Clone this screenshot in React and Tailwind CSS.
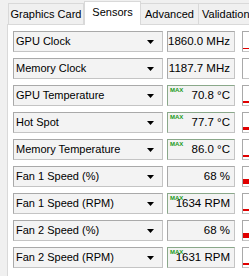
import React from "react";

const rows = [
  { label: "GPU Clock", value: "1860.0 MHz", max: false, bar: 1 },
  { label: "Memory Clock", value: "1187.7 MHz", max: false, bar: 0 },
  { label: "GPU Temperature", value: "70.8 °C", max: true, bar: 2 },
  { label: "Hot Spot", value: "77.7 °C", max: true, bar: 3 },
  { label: "Memory Temperature", value: "86.0 °C", max: true, bar: 2 },
  { label: "Fan 1 Speed (%)", value: "68 %", max: false, bar: 5 },
  { label: "Fan 1 Speed (RPM)", value: "1634 RPM", max: true, bar: 2 },
  { label: "Fan 2 Speed (%)", value: "68 %", max: false, bar: 5 },
  { label: "Fan 2 Speed (RPM)", value: "1631 RPM", max: true, bar: 2 },
];

function Arrow() {
  return (
    <svg width="7" height="4" viewBox="0 0 7 4" className="shrink-0">
      <polygon points="0,0 7,0 3.5,4" fill="#000" />
    </svg>
  );
}

export default function App() {
  return (
    <div
      className="w-[249px] h-[276px] bg-[#f0f0f0] overflow-hidden text-[#000] whitespace-nowrap"
      style={{ fontFamily: '"Liberation Sans", Arial, sans-serif' }}
    >
      <div className="h-[24px] flex items-end pl-[8px] relative">
        <div className="h-[21px] w-[76px] shrink-0 border border-b-0 border-[#d9d9d9] bg-[#f0f0f0] flex items-center justify-center text-[11px] pt-[1px]">
          Graphics Card
        </div>
        <div className="h-[24px] w-[57px] shrink-0 -mb-[1px] border border-b-0 border-[#d9d9d9] bg-white flex items-center justify-center text-[11px] pb-[3px] relative z-10">
          Sensors
        </div>
        <div className="h-[21px] w-[58px] shrink-0 border border-b-0 border-l-0 border-[#d9d9d9] bg-[#f0f0f0] flex items-center justify-center text-[11px] pt-[1px]">
          Advanced
        </div>
        <div className="h-[21px] w-[60px] border border-b-0 border-l-0 border-[#d9d9d9] bg-[#f0f0f0] flex items-center pl-[3px] text-[11px] pt-[1px] shrink-0">
          Validation
        </div>
      </div>
      <div className="ml-[7px] bg-white border-t border-l border-[#d9d9d9] h-[260px] pt-[6px] pl-[5px] flex flex-col gap-[6px]">
        {rows.map((r, i) => (
          <div key={i} className="flex h-[21px] shrink-0">
            <div className="w-[150px] shrink-0 h-full border border-[#c4c4c4] border-t-[#a9a9a9] border-l-[#a9a9a9] bg-[#f3f3f3] flex items-center justify-between pl-[2px] pr-[8px] text-[11px]">
              <span>{r.label}</span>
              <Arrow />
            </div>
            <div
              className={
                "ml-[4px] w-[68px] shrink-0 h-full border bg-[#f3f3f3] relative flex items-center justify-end pr-[4px] text-[11.5px] " +
                (r.max ? "border-[#c4c4c4] border-t-[#8aa88a] border-l-[#8aa88a]" : "border-[#c4c4c4] border-t-[#a9a9a9] border-l-[#a9a9a9]")
              }
            >
              {r.max && (
                <span className="absolute left-[2px] top-[1px] text-[6px] leading-[6px] text-[#1a9a1a] font-bold">
                  MAX
                </span>
              )}
              <span>{r.value}</span>
            </div>
            <div className="ml-[7px] w-[40px] h-full border border-[#c4c4c4] border-t-[#a9a9a9] border-l-[#a9a9a9] bg-white flex flex-col justify-end shrink-0">
              {r.bar > 0 && (
                <div className="bg-[#e00000] w-full mb-[2px]" style={{ height: r.bar + "px" }} />
              )}
            </div>
          </div>
        ))}
      </div>
    </div>
  );
}
